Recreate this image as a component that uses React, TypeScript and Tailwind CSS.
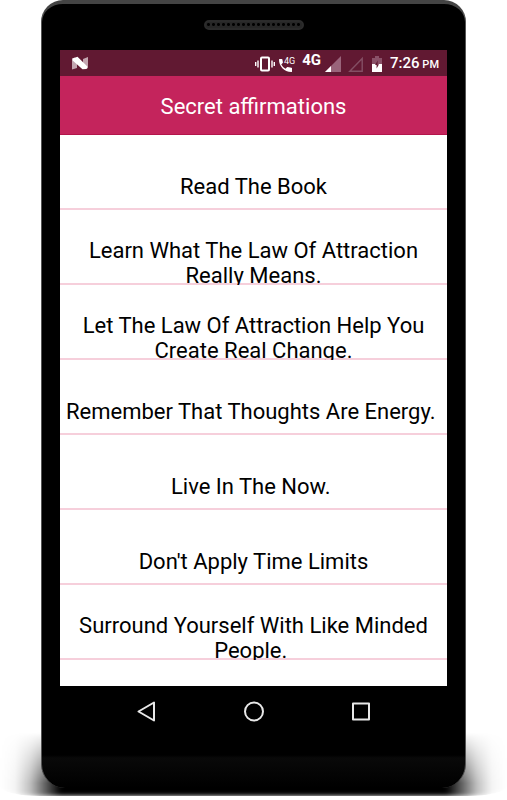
const affirmations = [
  "Read The Book",
  "Learn What The Law Of Attraction Really Means.",
  "Let The Law Of Attraction Help You Create Real Change.",
  "Remember That Thoughts Are Energy.\u00a0",
  "Live In The Now.\u00a0",
  "Don't Apply Time Limits",
  "Surround Yourself With Like Minded People.\u00a0",
];

function StatusBar() {
  return (
    <div className="flex h-[26px] items-center bg-[#611932] pl-3 pr-2 text-white">
      <svg className="h-[14px] w-4" viewBox="0 0 16 14">
        <path d="M0 2.500 3 1.500 5 5v7L0 13.500zM11 3 16 1v11l-2 1-3-4z" fill="#c3a5b0" />
        <path d="M.6 2.500 5.500.8 15.400 10.500 14.500 13 10.500 13.200.6 4.500z" fill="#fff" />
      </svg>

      <div className="ml-auto flex items-center pt-px">
        {/* Vibrate */}
        <svg className="h-4 w-5" viewBox="0 0 20 16" fill="none" stroke="#fff">
          <rect x="6" y="1.500" width="8" height="13" rx="1" strokeWidth="2" />
          <path d="M.7 6v4M3 4.500v7M17 4.500v7M19.300 6v4" strokeWidth="1.400" />
        </svg>

        {/* Call over 4G */}
        <svg className="ml-1 h-4 w-[17px]" viewBox="0 0 17 16">
          <path
            d="M0 3.500Q0 3 .5 3h2.300q.5 0 .6.500l.5 2.800q.1.400-.2.700L2.300 8.600q1.500 2.900 4.200 4.200l1.500-1.500q.3-.3.700-.2l3.800.6q.5.100.5.6v3.100q0 .6-.6.600C5 16 0 10 0 3.500z"
            fill="#fff"
          />
          <text x="5" y="8" fontSize="9" fill="#fff" className="font-['Roboto',sans-serif]">4G</text>
        </svg>
        <span className="ml-[6px] mb-2 text-[15px] leading-4 font-bold">4G</span>

        {/* Signal strength for both SIMs */}
        <svg className="ml-1 h-4 w-4" viewBox="0 0 16 16">
          <path d="M0 16 16 0v16z" fill="#99647a" />
          <path d="M0 16l6-6v6z" fill="#fff" />
        </svg>
        <svg className="ml-[7px] h-4 w-4" viewBox="0 0 16 16">
          <path d="M1.800 15.200 14.200 2.500v12.700z" fill="none" stroke="#844f64" strokeWidth="1.400" />
        </svg>

        <svg className="ml-2 h-4 w-[10px]" viewBox="0 0 10 16">
          <path d="M0 2h3V0h4v2h3v6H0z" fill="#8a5168" />
          <path d="M0 8h10v8H0z" fill="#fff" />
          <path d="M5.800 4.500 3 9h1.600v3.500L7 8.200H5.500z" fill="#611932" />
        </svg>
        <span className="ml-2 text-[15px] leading-5 font-medium">
          7:26 <span className="-ml-px text-[11px]">PM</span>
        </span>
      </div>
    </div>
  );
}

function NavBar() {
  return (
    <nav className="flex h-[52px] items-center justify-center gap-[83px]">
      <button type="button" aria-label="Back" className="h-6 w-6">
        <svg viewBox="0 0 24 24" fill="none" stroke="#e8e8e8" strokeWidth="2" strokeLinejoin="round">
          <path d="M3.500 11.500 19 2.500v18z" />
        </svg>
      </button>
      <button type="button" aria-label="Home" className="h-6 w-6">
        <svg viewBox="0 0 24 24" fill="none" stroke="#e8e8e8" strokeWidth="2">
          <circle cx="12" cy="11.500" r="9" />
        </svg>
      </button>
      <button type="button" aria-label="Recent apps" className="h-6 w-6">
        <svg viewBox="0 0 24 24" fill="none" stroke="#e8e8e8" strokeWidth="2" strokeLinejoin="round">
          <rect x="4" y="3.500" width="16" height="16" />
        </svg>
      </button>
    </nav>
  );
}

export default function App() {
  return (
    <main className="relative overflow-hidden bg-white px-[41px] pb-3 font-['Roboto',sans-serif]">
      {/* Ground shadow */}
      <div className="absolute inset-x-0 bottom-1 h-16 rounded-b-[40px_10px] bg-[linear-gradient(to_right,transparent,#0000000a_3%,#00000040_6%,#000000a0_9%,black_12%,black_88%,#000000a0_91%,#00000040_94%,#0000000a_97%,transparent)] mask-t-from-20% blur-[2px]" />

      {/* Phone body */}
      <div className="relative rounded-t-[22px] rounded-b-[24px] border-x border-t-4 border-x-[#555] border-t-[#444] bg-black bg-[linear-gradient(to_top,#000,#090909_30px,#000_33px)] px-[18px]">
        <div className="flex h-[46px] justify-center pt-4">
          <div className="h-[10px] w-[100px] rounded-full border-2 border-[#2b2b2b] bg-[#111] bg-[radial-gradient(circle,#000_1px,#262626_2px)] bg-size-[5px_5px]" />
        </div>

        <div className="bg-white">
          <StatusBar />
          <header className="flex h-[59px] items-center justify-center border-b border-[#b3154b] bg-[#c4245c] pt-[3px]">
            <h1 className="text-[22px] leading-6 text-white">Secret affirmations</h1>
          </header>
          <ul className="pb-[26px]">
            {affirmations.map((text) => (
              <li
                key={text}
                className="h-[75px] overflow-hidden px-1 pt-7 shadow-[inset_0_-2px_0_#f6cfdb]"
              >
                <p className="flex min-h-[47px] items-center justify-center text-center text-[22px] leading-[25px] text-black">
                  {text}
                </p>
              </li>
            ))}
          </ul>
        </div>

        <NavBar />
        <div className="h-[50px]" />
      </div>
    </main>
  );
}
